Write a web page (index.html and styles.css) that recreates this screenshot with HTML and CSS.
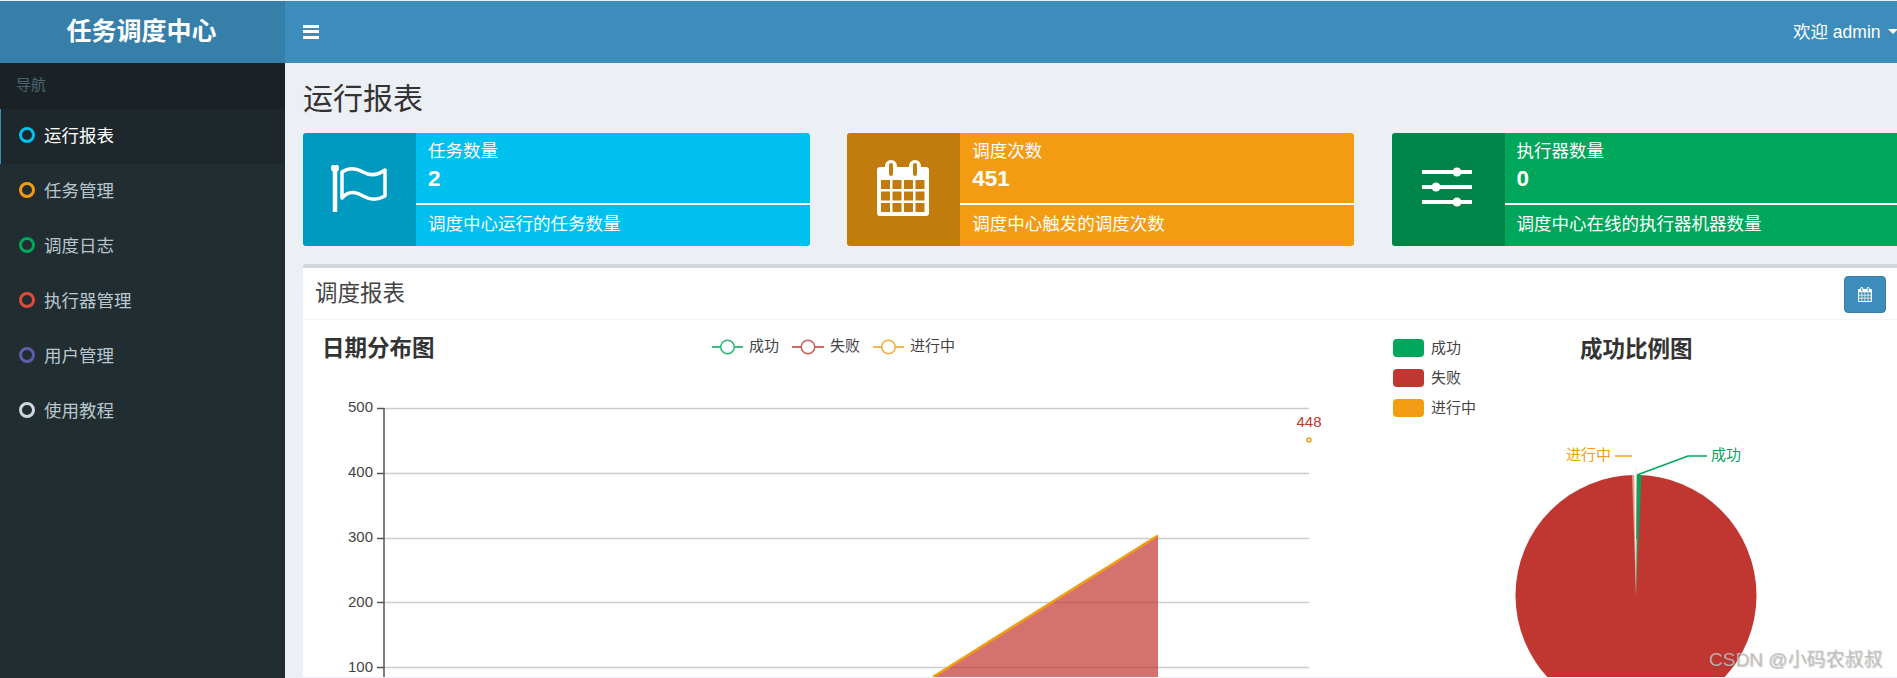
FILE: index.html
```html
<html>
  <head>
    <meta charset="utf-8">
    <title>任务调度中心</title>
    <link rel="stylesheet" href="styles.css">
  </head>
  <body>
    <svg class="defs">
      <symbol id="icon-calendar" viewBox="0 0 52 56">
        <path fill="currentColor" fill-rule="evenodd" d="M3 7H8V6a6 6 0 0 1 12 0V7H32V6a6 6 0 0 1 12 0V7H49a3 3 0 0 1 3 3V53a3 3 0 0 1-3 3H3a3 3 0 0 1-3-3V10a3 3 0 0 1 3-3zM12 5v9a2 2 0 0 0 4 0V5a2 2 0 0 0-4 0zM36 5v9a2 2 0 0 0 4 0V5a2 2 0 0 0-4 0zM4 20h9v9H4zM15.500 20h9v9h-9zM27 20h9v9h-9zM38.500 20h9v9h-9zM4 31.500h9v9H4zM15.500 31.500h9v9h-9zM27 31.500h9v9h-9zM38.500 31.500h9v9h-9zM4 43h9v9H4zM15.500 43h9v9h-9zM27 43h9v9h-9zM38.500 43h9v9h-9z"/>
      </symbol>
    </svg>

    <header class="topbar">
      <div class="logo">任务调度中心</div>
      <nav class="navbar">
        <span class="hamburger"><i></i><i></i><i></i></span>
        <span class="user">欢迎 admin<b class="caret"></b></span>
      </nav>
    </header>

    <div class="wrapper">
      <aside class="sidebar">
        <div class="nav-label">导航</div>
        <ul class="menu">
          <li class="active"><i class="dot dot-aqua"></i>运行报表</li>
          <li><i class="dot dot-yellow"></i>任务管理</li>
          <li><i class="dot dot-green"></i>调度日志</li>
          <li><i class="dot dot-red"></i>执行器管理</li>
          <li><i class="dot dot-purple"></i>用户管理</li>
          <li><i class="dot dot-gray"></i>使用教程</li>
        </ul>
      </aside>

      <main class="content">
        <h1>运行报表</h1>

        <section class="cards">
          <div class="card card-aqua">
            <div class="card-icon">
              <svg width="60" height="50" viewBox="332 165 60 50" fill="none" stroke="#fff">
                <circle cx="337" cy="168" r="4" fill="#fff" stroke="none"/>
                <path d="M337 170V212" stroke-width="4.500"/>
                <path d="M344 172C351 167 358 168 365 172S380 175 387 170V196C380 200 372 200 365 196S351 190 344 198Z" stroke-width="3.500" stroke-linejoin="round"/>
              </svg>
            </div>
            <div class="card-body">
              <div class="card-top">
                <span class="card-name">任务数量</span>
                <span class="card-num">2</span>
              </div>
              <div class="card-desc">调度中心运行的任务数量</div>
            </div>
          </div>

          <div class="card card-yellow">
            <div class="card-icon">
              <svg class="cal-big"><use href="#icon-calendar"/></svg>
            </div>
            <div class="card-body">
              <div class="card-top">
                <span class="card-name">调度次数</span>
                <span class="card-num">451</span>
              </div>
              <div class="card-desc">调度中心触发的调度次数</div>
            </div>
          </div>

          <div class="card card-green">
            <div class="card-icon">
              <svg class="sliders" width="50" height="40" viewBox="1423 167 50 40" fill="#fff">
                <rect x="1423" y="170" width="50" height="4"/>
                <rect x="1423" y="185" width="50" height="4"/>
                <rect x="1423" y="200" width="50" height="4"/>
                <circle cx="1458" cy="172" r="4.500"/>
                <circle cx="1437" cy="187" r="4.500"/>
                <circle cx="1458" cy="202" r="4.500"/>
              </svg>
            </div>
            <div class="card-body">
              <div class="card-top">
                <span class="card-name">执行器数量</span>
                <span class="card-num">0</span>
              </div>
              <div class="card-desc">调度中心在线的执行器机器数量</div>
            </div>
          </div>
        </section>

        <section class="panel">
          <div class="panel-head">
            <h3>调度报表</h3>
            <button class="btn-date"><svg class="cal-small"><use href="#icon-calendar"/></svg></button>
          </div>
          <div class="panel-body">
            <!-- coordinates in the charts are page pixels, the viewBox starts at the chart's own corner -->
            <svg class="chart-line" width="1077" height="357" viewBox="303 321 1077 357">
              <text class="chart-title" x="322" y="357">日期分布图</text>

              <g class="legend-text">
                <path d="M712 348H743" stroke="#00a65a" fill="none" stroke-width="1.500"/>
                <circle cx="727.500" cy="348" r="6.800" stroke="#2ab673" stroke-width="1.500" fill="#fff"/>
                <text x="749" y="352">成功</text>
                <path d="M792 348H824" stroke="#c23632" fill="none" stroke-width="1.500"/>
                <circle cx="808" cy="348" r="6.800" stroke="#cf5b58" stroke-width="1.500" fill="#fff"/>
                <text x="830" y="352">失败</text>
                <path d="M873 348H904" stroke="#f39c12" fill="none" stroke-width="1.500"/>
                <circle cx="888.500" cy="348" r="6.800" stroke="#f5ab35" stroke-width="1.500" fill="#fff"/>
                <text x="910" y="352">进行中</text>
              </g>

              <g stroke="#ccc" stroke-width="1.500">
                <path d="M384 409.500H1309"/>
                <path d="M384 474.500H1309"/>
                <path d="M384 539.500H1309"/>
                <path d="M384 603.500H1309"/>
                <path d="M384 668.500H1309"/>
              </g>
              <g stroke="#555" stroke-width="1.500">
                <path d="M384 409V678"/>
                <path d="M377 409.500H384"/>
                <path d="M377 474.500H384"/>
                <path d="M377 539.500H384"/>
                <path d="M377 603.500H384"/>
                <path d="M377 668.500H384"/>
              </g>
              <g class="axis-text">
                <text x="373" y="413">500</text>
                <text x="373" y="478">400</text>
                <text x="373" y="543">300</text>
                <text x="373" y="608">200</text>
                <text x="373" y="673">100</text>
              </g>

              <path d="M933 678L1158 536.500V678Z" fill="#c23632" fill-opacity=".7"/>
              <path d="M933 678L1158 536.500" stroke="#f39c12" stroke-width="2.500" fill="none"/>
              <text class="point-label" x="1309" y="428">448</text>
              <circle cx="1309" cy="441" r="2" fill="#fff" stroke="#f39c12" stroke-width="1.500"/>
            </svg>

            <svg class="chart-pie" width="517" height="357" viewBox="1380 321 517 357">
              <g class="legend-text">
                <rect x="1393" y="340" width="31" height="18" rx="4" fill="#00a65a"/>
                <text x="1431" y="354">成功</text>
                <rect x="1393" y="370" width="31" height="18" rx="4" fill="#c23632"/>
                <text x="1431" y="384">失败</text>
                <rect x="1393" y="400" width="31" height="18" rx="4" fill="#f39c12"/>
                <text x="1431" y="414">进行中</text>
              </g>
              <text class="chart-title" x="1580" y="358">成功比例图</text>

              <circle cx="1636" cy="596.500" r="120.500" fill="#c03630"/>
              <path d="M1636 597L1632 476L1634.500 476Z" fill="#dc9c90"/>
              <path d="M1636 597L1634 476L1637 476Z" fill="#fbeee0"/>
              <path d="M1636 597L1636.700 476L1641.500 476Z" fill="#0e9f5c"/>
              <path d="M1636 597L1636 540L1637 540Z" fill="#e0a89c"/>
              <path d="M1636 468V476" stroke="#fdf0d8" stroke-width="1.500"/>

              <path d="M1637 476L1688 457H1707" stroke="#00a65a" stroke-width="1.500" fill="none"/>
              <text class="pie-label pie-green" x="1711" y="461">成功</text>
              <path d="M1615 457H1632" stroke="#f39c12" stroke-width="1.500" fill="none"/>
              <text class="pie-label pie-yellow" x="1566" y="461">进行中</text>
            </svg>
          </div>
        </section>
      </main>
    </div>

    <div class="watermark">CSDN @小码农叔叔</div>
  </body>
</html>
```
FILE: styles.css
```css
html, body {
  margin: 0;
  height: 100%;
  overflow: hidden;
}

body {
  display: flex;
  flex-direction: column;
  padding-top: 1px;
  box-sizing: border-box;
  background-color: #ecf0f5;
  font-family: "Liberation Sans", "Noto Sans CJK SC", sans-serif;
  font-size: 17.5px;
  color: #333;
}

.defs {
  display: none;
}

/* top bar */
.topbar {
  display: flex;
  height: 62px;
  flex-shrink: 0;
  color: #fff;
}

.logo {
  width: 283px;
  padding-right: 2px;
  line-height: 60px;
  text-align: center;
  font-size: 25px;
  font-weight: bold;
  background-color: #367fa9;
}

.navbar {
  flex: 1;
  display: flex;
  align-items: center;
  justify-content: space-between;
  padding-left: 18px;
  background-color: #3c8dbc;
}

.hamburger {
  display: flex;
  flex-direction: column;
  gap: 2.500px;
  width: 16px;
  margin-top: -1px;
}

.hamburger i {
  height: 3px;
  background-color: #fff;
}

.user {
  display: flex;
  align-items: center;
  width: 104px;
  flex-shrink: 0;
  white-space: nowrap;
  margin-top: -4px;
}

.caret {
  flex-shrink: 0;
  width: 0;
  height: 0;
  margin: 3px 0 0 7px;
  border-top: 5px solid #fff;
  border-left: 5px solid transparent;
  border-right: 5px solid transparent;
}

/* sidebar */
.wrapper {
  flex: 1;
  display: flex;
  min-height: 0;
}

.sidebar {
  width: 285px;
  flex-shrink: 0;
  background-color: #222d32;
  color: #b8c7ce;
}

.nav-label {
  height: 46px;
  line-height: 44px;
  padding-left: 16px;
  font-size: 15px;
  color: #4b646f;
  background-color: #1a2226;
}

.menu {
  list-style: none;
  margin: 0;
  padding: 0;
}

.menu li {
  display: flex;
  align-items: center;
  gap: 9px;
  height: 55px;
  box-sizing: border-box;
  padding: 0 0 4px 19px;
}

.menu li.active {
  padding-left: 18px;
  border-left: 1px solid #3c8dbc;
  color: #fff;
  background-color: #1e282c;
}

.dot {
  width: 10px;
  height: 10px;
  border: 3px solid;
  border-radius: 50%;
}

.dot-aqua { border-color: #00c0ef; }
.dot-yellow { border-color: #f39c12; }
.dot-green { border-color: #00a65a; }
.dot-red { border-color: #dd4b39; }
.dot-purple { border-color: #605ca8; }
.dot-gray { border-color: #d2d6de; }

/* content */
.content {
  flex: 1;
  min-width: 0;
  padding: 19px 0 0 18px;
  overflow: hidden;
}

h1 {
  margin: 0 0 18px;
  font-size: 30px;
  font-weight: normal;
  line-height: 33px;
}

.cards {
  display: grid;
  grid-template-columns: repeat(3, 507px);
  column-gap: 37.250px;
  width: 1596px;
  margin-bottom: 18px;
}

.card {
  display: flex;
  height: 113px;
  border-radius: 3px;
  overflow: hidden;
  color: #fff;
}

.card-aqua { background-color: #00c0ef; }
.card-yellow { background-color: #f39c12; }
.card-green { background-color: #00a65a; }

.card-icon {
  display: flex;
  align-items: center;
  justify-content: center;
  width: 113px;
  flex-shrink: 0;
  background-color: rgba(0, 0, 0, 0.2);
}

.cal-big {
  width: 52px;
  height: 56px;
  margin: 0 2px 3px 0;
}

.sliders {
  margin: 0 2px 5px 0;
}

.card-body {
  flex: 1;
}

.card-top {
  display: flex;
  flex-direction: column;
  height: 68px;
  padding: 5px 0 0 12px;
  box-sizing: border-box;
}

.card-name {
  line-height: 26px;
}

.card-num {
  font-size: 22.500px;
  font-weight: bold;
  line-height: 30px;
}

.card-desc {
  height: 43px;
  padding: 6px 0 0 12px;
  box-sizing: border-box;
  border-top: 2px solid #fff;
  margin-top: 2px;
  line-height: 26px;
}

/* report panel */
.panel {
  width: 1596px;
  border-top: 4px solid #d2d6de;
  border-radius: 3px 3px 0 0;
  background-color: #fff;
}

.panel-head {
  display: flex;
  align-items: center;
  justify-content: space-between;
  height: 52px;
  padding: 0 13px 0 12px;
  box-sizing: border-box;
  border-bottom: 1px solid #f4f4f4;
}

.panel-head h3 {
  margin: 0;
  padding-bottom: 6px;
  font-size: 22.500px;
  font-weight: normal;
  color: #444;
}

.btn-date {
  display: flex;
  align-items: center;
  justify-content: center;
  width: 42px;
  height: 37px;
  margin-top: 1px;
  padding: 0;
  border: 1px solid #367fa9;
  border-radius: 4px;
  color: #fff;
  background-color: #3c8dbc;
}

.cal-small {
  width: 14px;
  height: 15px;
}

.panel-body {
  display: flex;
}

.chart-line,
.chart-pie {
  display: block;
  flex-shrink: 0;
}

.chart-title {
  font-size: 22.500px;
  font-weight: bold;
  fill: #333;
}

.legend-text text {
  font-size: 15px;
  fill: #444;
}

.axis-text text {
  font-size: 15px;
  fill: #444;
  text-anchor: end;
}

.point-label {
  font-size: 15px;
  fill: #c23632;
  text-anchor: middle;
}

.pie-label {
  font-size: 15px;
}

.pie-green { fill: #00a65a; }
.pie-yellow { fill: #f39c12; }

/* csdn stamp */
.watermark {
  position: absolute;
  left: 1709px;
  top: 648px;
  font-size: 19px;
  line-height: 24px;
  white-space: nowrap;
  color: rgba(190, 190, 190, 0.85);
  text-shadow: 1px 1px 1px rgba(90, 90, 90, 0.35);
}
```
